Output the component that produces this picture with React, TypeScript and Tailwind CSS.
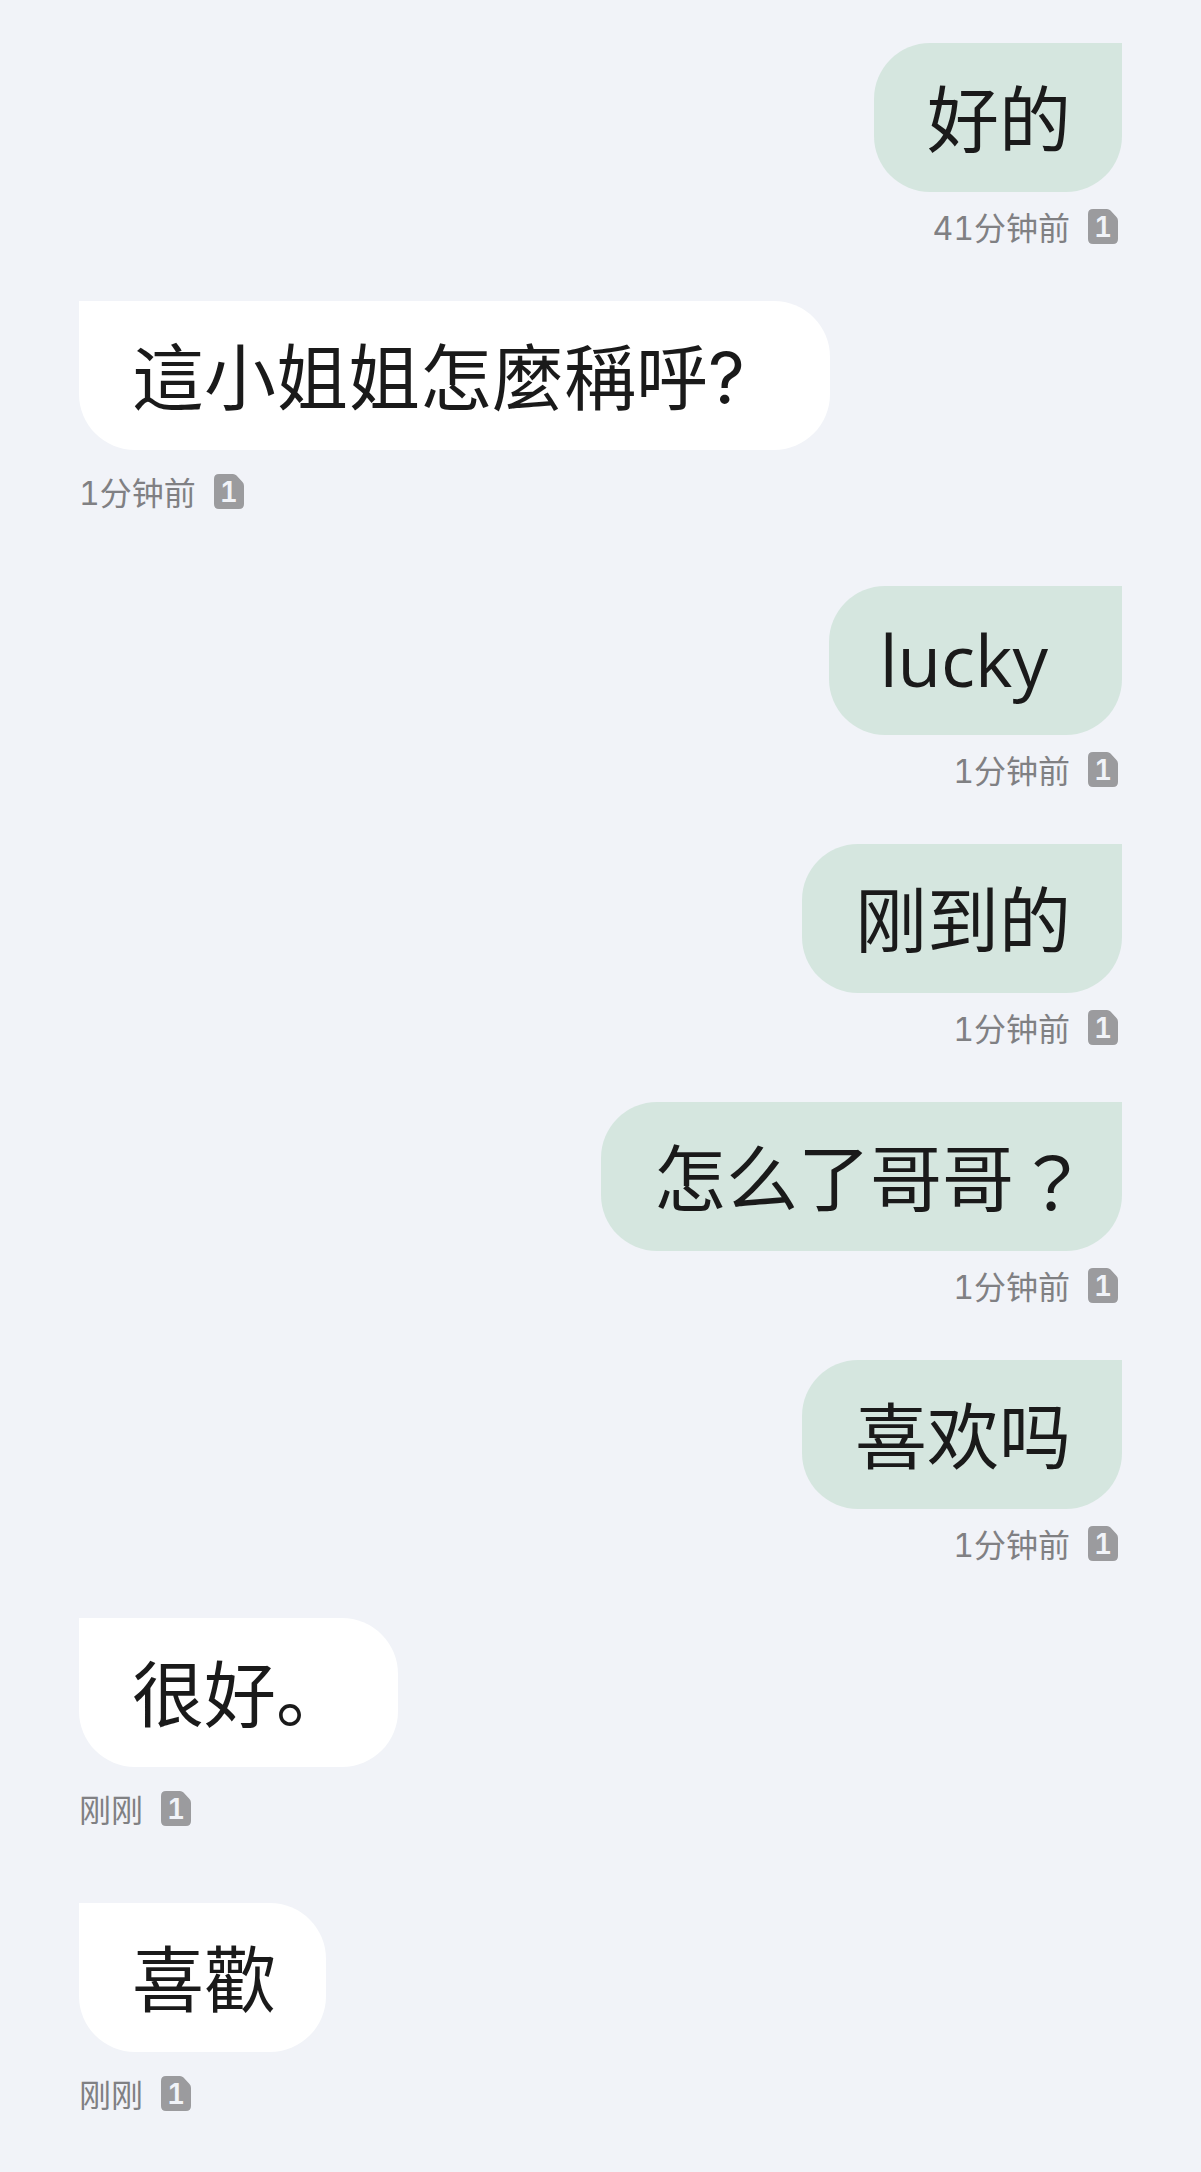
import React from "react";

function DocIcon() {
  return (
    <span className="relative ml-[18px] inline-flex h-[35px] w-[30px] shrink-0 items-center justify-center">
      <svg width="30" height="35" viewBox="0 0 30 35" className="absolute inset-0">
        <path d="M5 0H19Q21 0 22.500 1.500L28.500 8Q30 9.500 30 12V30Q30 35 25 35H5Q0 35 0 30V5Q0 0 5 0Z" fill="#9b9b9e" />
      </svg>
      <span className="relative font-['Inter'] text-[28px] font-semibold leading-none text-[#f1f3f8]">1</span>
    </span>
  );
}

type Msg = { text: React.ReactNode; time: string; mine: boolean; extra?: string };
const msgs: Msg[] = [
  { text: "好的", time: "41分钟前", mine: true },
  { text: "這小姐姐怎麼稱呼?", time: "1分钟前", mine: false, extra: "pr-[85px]" },
  {
    text: <span className="ml-[-2px] -translate-y-[3px] font-['Open_Sans'] text-[71px]">lucky</span>,
    time: "1分钟前",
    mine: true,
    extra: "pr-[74px]",
  },
  { text: "刚到的", time: "1分钟前", mine: true },
  {
    text: (
      <>
        怎么了哥哥
        <span className="ml-[2px] mr-[-17px] inline-block font-['Noto_Sans_CJK_JP']">？</span>
      </>
    ),
    time: "1分钟前",
    mine: true,
  },
  { text: "喜欢吗", time: "1分钟前", mine: true },
  { text: "很好。", time: "刚刚", mine: false },
  { text: "喜歡", time: "刚刚", mine: false },
];

export default function App() {
  return (
    <div className="h-[2172px] w-[1201px] overflow-hidden bg-[#f1f3f8] pt-[43px] font-['Inter','Noto_Sans_CJK_SC',sans-serif] tabular-nums">
      {msgs.map((m, i) =>
        m.mine ? (
          <div key={i} className="flex h-[258px] flex-col items-end pr-[79px]">
            <div className={`flex h-[149px] items-center rounded-[56px] rounded-tr-none bg-[#d5e6df] pt-[4px] pl-[53px] text-[72px] leading-none whitespace-nowrap text-[#1a1a1a] ${m.extra ?? "pr-[51px]"}`}>
              {m.text}
            </div>
            <div className="mt-[17px] flex h-[35px] items-center pr-[4px] text-[32px] leading-none text-[#808083]">
              <span className="translate-y-[2px]">{m.time}</span>
              <DocIcon />
            </div>
          </div>
        ) : (
          <div key={i} className="flex h-[285px] flex-col items-start pl-[79px]">
            <div className={`flex h-[149px] items-center rounded-[56px] rounded-tl-none bg-white pt-[4px] pl-[53px] text-[72px] leading-none whitespace-nowrap text-[#1a1a1a] ${m.extra ?? "pr-[50px]"}`}>
              {m.text}
            </div>
            <div className="mt-[24px] flex h-[35px] items-center text-[32px] leading-none text-[#808083]">
              <span className="translate-y-[2px]">{m.time}</span>
              <DocIcon />
            </div>
          </div>
        )
      )}
    </div>
  );
}
